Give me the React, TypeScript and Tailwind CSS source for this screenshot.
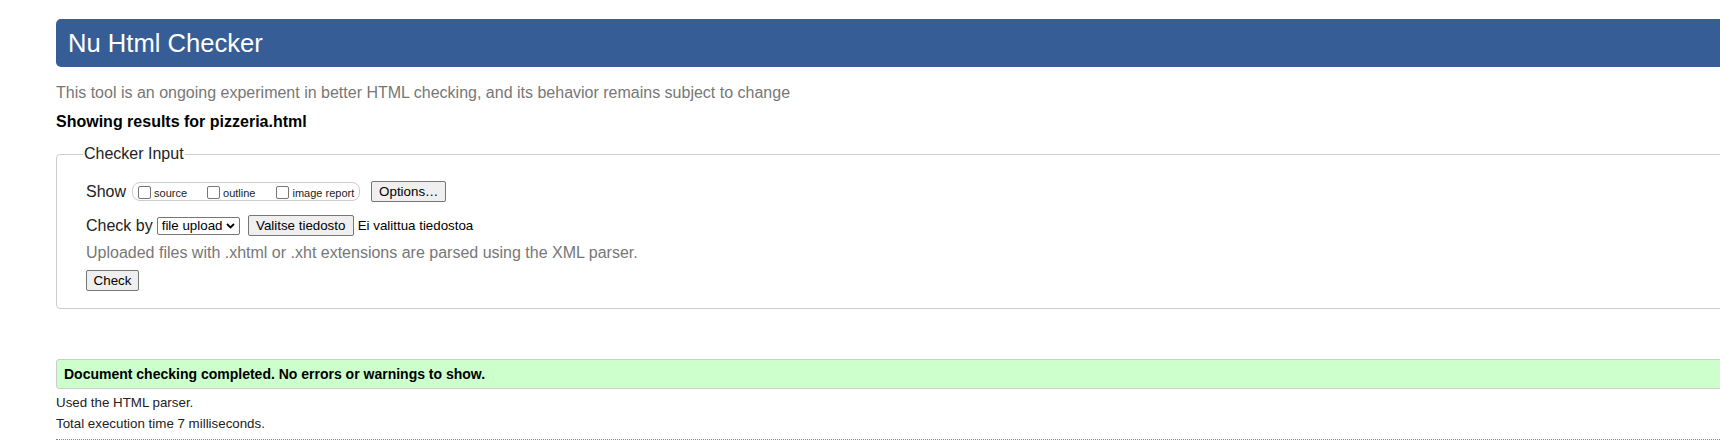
import React from "react";

function Box({ label }: { label: string }) {
  return (
    <span className="flex items-center">
      <span className="w-[13px] h-[13px] border border-[#767676] rounded-[2px] bg-white mt-[2px]" />
      <span className="ml-[3px] text-[11px] leading-[14px] text-[#222] mt-[3px]">{label}</span>
    </span>
  );
}

export default function App() {
  return (
    <div className="w-[1720px] h-[444px] overflow-hidden bg-white text-[#222]" style={{ fontFamily: '"Liberation Sans", Arial, sans-serif' }}>
      <div className="pl-[56px] pt-[19px] w-[1790px]">
        <div className="h-[48px] bg-[#365d95] rounded-[5px] flex items-center pl-[12px]">
          <span className="text-white text-[25.6px] leading-[30px]">Nu Html Checker</span>
        </div>
        <p className="mt-[16px] text-[16px] leading-[20px] text-[#777]">
          This tool is an ongoing experiment in better HTML checking, and its behavior remains subject to change
        </p>
        <p className="mt-[9px] text-[16px] leading-[20px] font-bold text-black">Showing results for pizzeria.html</p>

        <div className="relative mt-[22px] border border-[#cccccc] rounded-[4px] pl-[29px] pt-[26px] pb-[17px]">
          <span className="absolute top-[-11px] left-[26px] bg-white px-[1px] text-[16px] leading-[20px] text-[#222]">Checker Input</span>

          <div className="flex items-center h-[21px]">
            <span className="text-[16px] leading-[20px]">Show</span>
            <span className="ml-[6px] h-[19px] flex items-center border border-[#cccccc] rounded-[8px] pl-[5px] pr-[5px]">
              <span className="mr-[20px]"><Box label="source" /></span>
              <span className="mr-[21px]"><Box label="outline" /></span>
              <Box label="image report" />
            </span>
            <span className="ml-[11px] w-[75px] h-[21px] flex items-center justify-center bg-[#efefef] border border-[#767676] rounded-[2px] text-[13.33px] text-black">
              Options…
            </span>
          </div>

          <div className="flex items-center h-[21px] mt-[13px]">
            <span className="text-[16px] leading-[20px]">Check by</span>
            <span className="ml-[4px] w-[83px] h-[18px] flex items-center justify-between border border-[#767676] rounded-[2px] pl-[4px] pr-[4px] text-[13.33px] text-black bg-white">
              <span>file upload</span>
              <svg width="9" height="6" viewBox="0 0 9 6" className="mt-[1px]">
                <path d="M1 1 L4.5 4.5 L8 1" fill="none" stroke="#000" strokeWidth="1.8" />
              </svg>
            </span>
            <span className="ml-[8px] w-[106px] h-[21px] flex items-center justify-center bg-[#efefef] border border-[#767676] rounded-[2px] text-[13.33px] text-black">
              Valitse tiedosto
            </span>
            <span className="ml-[4px] text-[13.33px] text-black">Ei valittua tiedostoa</span>
          </div>

          <p className="mt-[7px] text-[16px] leading-[20px] text-[#777]">
            Uploaded files with .xhtml or .xht extensions are parsed using the XML parser.
          </p>

          <div className="mt-[7px] w-[53px] h-[21px] flex items-center justify-center bg-[#efefef] border border-[#767676] rounded-[2px] text-[13.33px] text-black">
            Check
          </div>
        </div>

        <div className="mt-[50px] h-[30px] flex items-center bg-[#ccffcc] border border-[#cccccc] rounded-[3px] pl-[7px]">
          <span className="text-[14px] font-bold text-black">Document checking completed. No errors or warnings to show.</span>
        </div>
        <p className="mt-[6px] text-[13.33px] leading-[16px] text-[#222]">Used the HTML parser.</p>
        <p className="mt-[5px] text-[13.33px] leading-[16px] text-[#222]">Total execution time 7 milliseconds.</p>
        <div className="mt-[7px] border-t border-dotted border-[#888]" />
      </div>
    </div>
  );
}
